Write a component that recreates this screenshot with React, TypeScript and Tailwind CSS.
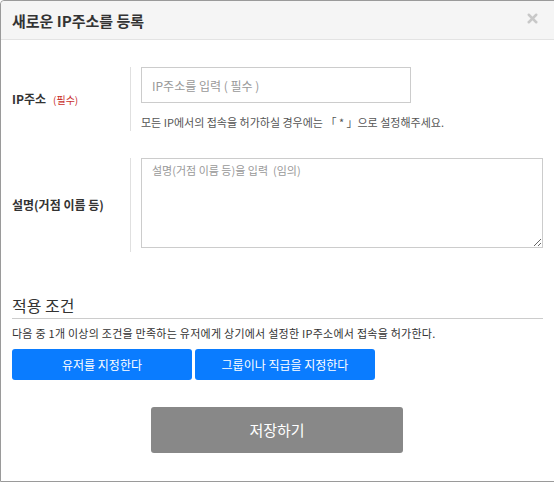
import { X } from 'lucide-react';

const font = { fontFamily: '"Noto Sans CJK KR", "Noto Sans", sans-serif' };

export default function App() {
  return (
    <div className="w-[554px] h-[482px] overflow-hidden bg-white" style={font}>
      <div className="w-[556px] h-[482px] border border-[#9a9a9a] rounded-tl-[4px] flex flex-col bg-white">
        {/* Header */}
        <div className="h-[39px] shrink-0 bg-[#f5f5f5] border-b border-[#e3e3e3] flex items-center justify-between pl-[11px] pr-[15px] rounded-tl-[4px]">
          <h2 className="text-[15px] font-bold text-[#333] leading-none">새로운 IP주소를 등록</h2>
          <X className="w-[15px] h-[15px] text-[#c8c8c8] -mt-[4px]" strokeWidth={4} />
        </div>

        {/* Body */}
        <div className="px-[11px] pt-[27px] flex flex-col">
          {/* IP row */}
          <div className="flex">
            <div className="w-[118px] shrink-0 flex items-center">
              <span className="text-[12px] font-bold text-[#333]">IP주소</span>
              <span className="text-[10px] text-[#c9302c] ml-[7px] mt-[1px]">(필수)</span>
            </div>
            <div className="border-l border-[#e0e0e0] pl-[10px] h-[64px]">
              <input
                type="text"
                placeholder="IP주소를 입력 ( 필수 )"
                className="w-[270px] h-[36px] border border-[#cccccc] px-[10px] text-[12px] placeholder:text-[#999] outline-none"
              />
              <p className="text-[11px] text-[#555] mt-[11px] leading-[16px]">
                모든 IP에서의 접속을 허가하실 경우에는 「 * 」으로 설정해주세요.
              </p>
            </div>
          </div>

          {/* Description row */}
          <div className="flex mt-[27px]">
            <div className="w-[118px] shrink-0 flex items-center">
              <span className="text-[12px] font-bold text-[#333]">설명(거점 이름 등)</span>
            </div>
            <div className="border-l border-[#e0e0e0] pl-[10px] h-[94px]">
              <textarea
                placeholder="설명(거점 이름 등)을 입력  (임의)"
                className="block w-[402px] h-[90px] border border-[#cccccc] px-[10px] pt-[3px] pb-[4px] text-[11px] placeholder:text-[#999] outline-none"
              />
            </div>
          </div>

          {/* Conditions */}
          <h3 className="mt-[42px] text-[16px] text-[#333] leading-[22px] pb-[2px] border-b border-[#cccccc] w-[531px]">
            적용 조건
          </h3>
          <p className="text-[11px] text-[#333] mt-[6px] leading-[16px] tracking-[0.25px]">
            다음 중 1개 이상의 조건을 만족하는 유저에게 상기에서 설정한 IP주소에서 접속을 허가한다.
          </p>
          <div className="flex gap-[3px] mt-[8px]">
            <button className="w-[180px] h-[31px] rounded-[3px] bg-[#0a7cff] text-white text-[12px]">
              유저를 지정한다
            </button>
            <button className="w-[180px] h-[31px] rounded-[3px] bg-[#0a7cff] text-white text-[12px]">
              그룹이나 직급을 지정한다
            </button>
          </div>

          <div className="flex justify-center mt-[27px] pr-[2px]">
            <button className="w-[252px] h-[46px] rounded-[3px] bg-[#888888] text-white text-[15px]">
              저장하기
            </button>
          </div>
        </div>
      </div>
    </div>
  );
}
